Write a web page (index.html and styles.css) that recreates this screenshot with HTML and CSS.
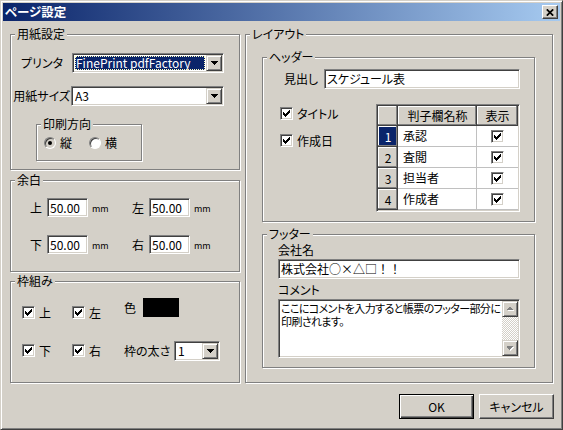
FILE: index.html
```html
<!DOCTYPE html>
<html lang="ja">
<head>
<meta charset="utf-8">
<title>ページ設定</title>
<link rel="stylesheet" href="styles.css">
</head>
<body>
<div class="window">
  <div class="titlebar">
    <span class="title">ページ設定</span>
    <span class="close"><svg width="8" height="7" viewBox="0 0 8 7"><path d="M0.8 0.3 L7.2 6.7 M7.2 0.3 L0.8 6.7" stroke="#000" stroke-width="1.7"/></svg></span>
  </div>
  <div class="client">
    <div class="columns">
      <div class="col-left">
        <div class="group g-paper">
          <span class="legend">用紙設定</span>
          <div class="row">
            <span class="lbl lbl-printer">プリンタ</span>
            <div class="combo combo-printer">
              <div class="combo-text"><span class="sel">FinePrint pdfFactory</span></div>
              <div class="combo-btn"><svg width="7" height="4" viewBox="0 0 7 4"><path d="M0 0H7V1H6V2H5V3H4V4H3V3H2V2H1V1H0Z" fill="#000"/></svg></div>
            </div>
          </div>
          <div class="row row-size">
            <span class="lbl lbl-size">用紙サイズ</span>
            <div class="combo combo-size">
              <div class="combo-text"><span class="val">A3</span></div>
              <div class="combo-btn"><svg width="7" height="4" viewBox="0 0 7 4"><path d="M0 0H7V1H6V2H5V3H4V4H3V3H2V2H1V1H0Z" fill="#000"/></svg></div>
            </div>
          </div>
          <div class="group g-orient">
            <span class="legend">印刷方向</span>
            <div class="radios">
              <span class="radio radio-on"></span><span class="rlbl">縦</span>
              <span class="radio radio-off"></span><span class="rlbl">横</span>
            </div>
          </div>
        </div>

        <div class="group g-margin">
          <span class="legend">余白</span>
          <div class="margin-grid">
            <div class="mfield"><span class="lbl mlbl">上</span><span class="num">50.00</span><span class="mm">mm</span></div>
            <div class="mfield"><span class="lbl mlbl">左</span><span class="num">50.00</span><span class="mm">mm</span></div>
            <div class="mfield"><span class="lbl mlbl">下</span><span class="num">50.00</span><span class="mm">mm</span></div>
            <div class="mfield"><span class="lbl mlbl">右</span><span class="num">50.00</span><span class="mm">mm</span></div>
          </div>
        </div>

        <div class="group g-frame">
          <span class="legend">枠組み</span>
          <div class="frame-checks">
            <div class="chk-item"><span class="chk"><svg width="7" height="7" viewBox="0 0 7 7"><path d="M0 2H1V3H2V4H3V3H4V2H5V1H6V0H7V3H6V4H5V5H4V6H3V7H2V6H1V5H0Z" fill="#000"/></svg></span><span>上</span></div>
            <div class="chk-item"><span class="chk"><svg width="7" height="7" viewBox="0 0 7 7"><path d="M0 2H1V3H2V4H3V3H4V2H5V1H6V0H7V3H6V4H5V5H4V6H3V7H2V6H1V5H0Z" fill="#000"/></svg></span><span>左</span></div>
            <div class="chk-item"><span class="chk"><svg width="7" height="7" viewBox="0 0 7 7"><path d="M0 2H1V3H2V4H3V3H4V2H5V1H6V0H7V3H6V4H5V5H4V6H3V7H2V6H1V5H0Z" fill="#000"/></svg></span><span>下</span></div>
            <div class="chk-item"><span class="chk"><svg width="7" height="7" viewBox="0 0 7 7"><path d="M0 2H1V3H2V4H3V3H4V2H5V1H6V0H7V3H6V4H5V5H4V6H3V7H2V6H1V5H0Z" fill="#000"/></svg></span><span>右</span></div>
          </div>
          <div class="frame-right">
            <div class="color-row"><span class="lbl clbl">色</span><span class="swatch"></span></div>
            <div class="thick-row">
              <span class="lbl tlbl">枠の太さ</span>
              <div class="combo combo-small">
                <div class="combo-text"><span class="val">1</span></div>
                <div class="combo-btn"><svg width="7" height="4" viewBox="0 0 7 4"><path d="M0 0H7V1H6V2H5V3H4V4H3V3H2V2H1V1H0Z" fill="#000"/></svg></div>
              </div>
            </div>
          </div>
        </div>
      </div>

      <div class="col-right">
        <div class="group g-layout">
          <span class="legend">レイアウト</span>
          <div class="group g-header">
            <span class="legend">ヘッダー</span>
            <div class="head-row">
              <span class="lbl hlbl">見出し</span>
              <span class="text-input w196">スケジュール表</span>
            </div>
            <div class="head-lower">
              <div class="head-checks">
                <div class="chk-item"><span class="chk"><svg width="7" height="7" viewBox="0 0 7 7"><path d="M0 2H1V3H2V4H3V3H4V2H5V1H6V0H7V3H6V4H5V5H4V6H3V7H2V6H1V5H0Z" fill="#000"/></svg></span><span>タイトル</span></div>
                <div class="chk-item"><span class="chk"><svg width="7" height="7" viewBox="0 0 7 7"><path d="M0 2H1V3H2V4H3V3H4V2H5V1H6V0H7V3H6V4H5V5H4V6H3V7H2V6H1V5H0Z" fill="#000"/></svg></span><span>作成日</span></div>
              </div>
              <div class="grid-wrap">
                <div class="grid">
                  <div class="hcell"></div>
                  <div class="hcell">判子欄名称</div>
                  <div class="hcell">表示</div>

                  <div class="hcell rsel">1</div>
                  <div class="dcell">承認</div>
                  <div class="dcell center"><span class="chk"><svg width="7" height="7" viewBox="0 0 7 7"><path d="M0 2H1V3H2V4H3V3H4V2H5V1H6V0H7V3H6V4H5V5H4V6H3V7H2V6H1V5H0Z" fill="#000"/></svg></span></div>

                  <div class="hcell">2</div>
                  <div class="dcell">査閲</div>
                  <div class="dcell center"><span class="chk"><svg width="7" height="7" viewBox="0 0 7 7"><path d="M0 2H1V3H2V4H3V3H4V2H5V1H6V0H7V3H6V4H5V5H4V6H3V7H2V6H1V5H0Z" fill="#000"/></svg></span></div>

                  <div class="hcell">3</div>
                  <div class="dcell">担当者</div>
                  <div class="dcell center"><span class="chk"><svg width="7" height="7" viewBox="0 0 7 7"><path d="M0 2H1V3H2V4H3V3H4V2H5V1H6V0H7V3H6V4H5V5H4V6H3V7H2V6H1V5H0Z" fill="#000"/></svg></span></div>

                  <div class="hcell">4</div>
                  <div class="dcell">作成者</div>
                  <div class="dcell center"><span class="chk"><svg width="7" height="7" viewBox="0 0 7 7"><path d="M0 2H1V3H2V4H3V3H4V2H5V1H6V0H7V3H6V4H5V5H4V6H3V7H2V6H1V5H0Z" fill="#000"/></svg></span></div>
                </div>
              </div>
            </div>
          </div>

          <div class="group g-footer">
            <span class="legend">フッター</span>
            <div class="flbl">会社名</div>
            <div class="text-input w242 fullwidth">株式会社○×△□！！</div>
            <div class="flbl flbl2">コメント</div>
            <div class="memo">
              <div class="memo-text"><div class="memo-line">ここにコメントを入力すると帳票のフッター部分に</div><div class="memo-line">印刷されます。</div></div>
              <div class="vscroll">
                <div class="sb-btn"><svg width="7" height="5" viewBox="0 0 7 5"><path d="M4 1H5V2H6V3H7V4H1V3H2V2H3V1H4Z" fill="#fff"/><path d="M3 0H4V1H5V2H6V3H0V2H1V1H2V0H3Z" fill="#808080"/></svg></div>
                <div class="sb-track"></div>
                <div class="sb-btn"><svg width="7" height="5" viewBox="0 0 7 5"><path d="M1 1H7V2H6V3H5V4H4V5H3V4H2V3H1Z" fill="#fff"/><path d="M0 0H6V1H5V2H4V3H3V4H2V3H1V2H0Z" fill="#808080"/></svg></div>
              </div>
            </div>
          </div>
        </div>
      </div>
    </div>

    <div class="buttons">
      <div class="btn btn-default">OK</div>
      <div class="btn">キャンセル</div>
    </div>
  </div>
</div>
</body>
</html>
```

FILE: styles.css
```css
* { box-sizing: border-box; }
html, body { margin: 0; padding: 0; }
body {
  width: 563px;
  height: 430px;
  overflow: hidden;
  background: #d4d0c8;
  color: #000;
  font-family: "Noto Sans CJK JP", "Noto Sans", sans-serif;
  font-size: 12px;
  line-height: 14px;
  font-feature-settings: "palt";
}

.window {
  width: 563px;
  height: 430px;
  border: 1px solid;
  border-color: #d4d0c8 #404040 #404040 #d4d0c8;
  box-shadow: inset 1px 1px #ffffff, inset -1px -1px #808080;
  padding: 2px;
  background: #d4d0c8;
  display: flex;
  flex-direction: column;
}

.titlebar {
  height: 18px;
  flex: none;
  background: linear-gradient(to right, #0a246a, #a6caf0);
  display: flex;
  align-items: center;
  justify-content: space-between;
  padding: 0 2px 0 2px;
}
.title {
  color: #fff;
  font-weight: bold;
  font-size: 12.5px;
  line-height: 14px;
}
.close {
  width: 16px;
  height: 14px;
  background: #d4d0c8;
  border: 1px solid;
  border-color: #ffffff #404040 #404040 #ffffff;
  box-shadow: inset -1px -1px #808080;
  display: flex;
  align-items: center;
  justify-content: center;
}
.close svg { display: block; }

.client {
  padding: 13px 7px 0 7px;
}
.columns {
  display: flex;
  gap: 5px;
}
.col-left {
  width: 230px;
  display: flex;
  flex-direction: column;
}
.col-right {
  width: 308px;
}

/* etched group box */
.group {
  position: relative;
  border: 1px solid #808080;
  box-shadow: inset 1px 1px #ffffff, 1px 1px #ffffff;
}
.legend {
  position: absolute;
  top: -8px;
  left: 4px;
  padding: 0 2px;
  background: #d4d0c8;
  line-height: 14px;
  white-space: nowrap;
}

.lbl { white-space: nowrap; }

/* 用紙設定 */
.g-paper {
  height: 136px;
  padding-top: 18px;
}
.row {
  display: flex;
  align-items: center;
  height: 20px;
}
.row-size { margin-top: 13px; }
.lbl-printer { width: 61px; text-align: right; padding-right: 9px; }
.lbl-size { width: 60px; text-align: right; padding-right: 1px; }

.combo {
  display: flex;
  height: 20px;
  border: 1px solid;
  border-color: #808080 #ffffff #ffffff #808080;
  box-shadow: inset 1px 1px #404040, inset -1px -1px #d4d0c8;
  padding: 1px;
  background: #fff;
}
.combo-printer { width: 152px; }
.combo-size { width: 153px; }
.combo-small { width: 46px; }
.combo-text {
  flex: 1;
  display: flex;
  align-items: center;
  min-width: 0;
  white-space: nowrap;
  overflow: hidden;
}
.combo-text .val { padding-left: 2px; }
.sel {
  flex: 1;
  margin: 0 1px;
  height: 14px;
  line-height: 14px;
  background: #0a246a;
  color: #fff;
  padding-left: 1px;
  outline: 1px dotted #ffffc0;
  outline-offset: -1px;
}
.combo-btn {
  width: 16px;
  height: 16px;
  flex: none;
  background: #d4d0c8;
  border: 1px solid;
  border-color: #d4d0c8 #404040 #404040 #d4d0c8;
  box-shadow: inset 1px 1px #ffffff, inset -1px -1px #808080;
  display: flex;
  align-items: center;
  justify-content: center;
}
.combo-btn svg { display: block; }

.g-orient {
  width: 106px;
  height: 37px;
  margin: 18px 0 0 25px;
  padding: 11px 0 0 7px;
}
.radios {
  display: flex;
  align-items: center;
  height: 14px;
}
.radio {
  width: 12px;
  height: 12px;
  flex: none;
  border-radius: 50%;
  border: 1px solid;
  border-color: #808080 #ffffff #ffffff #808080;
  box-shadow: inset 1px 1px #404040;
  background: #fff;
  position: relative;
}
.radio-on { background: #d4d0c8; }
.radio-on::after {
  content: "";
  position: absolute;
  left: 3px;
  top: 3px;
  width: 4px;
  height: 4px;
  border-radius: 50%;
  background: #000;
}
.rlbl { margin-left: 4px; width: 29px; }

/* 余白 */
.g-margin {
  height: 92px;
  margin-top: 10px;
  padding: 17px 0 0 19px;
}
.margin-grid {
  display: grid;
  grid-template-columns: 102px 102px;
  grid-auto-rows: 19px;
  row-gap: 18px;
}
.mfield {
  display: flex;
  align-items: center;
}
.mlbl { width: 17px; }
.num {
  width: 41px;
  height: 19px;
  border: 1px solid;
  border-color: #808080 #ffffff #ffffff #808080;
  box-shadow: inset 1px 1px #404040, inset -1px -1px #d4d0c8;
  background: #fff;
  padding-left: 2px;
  display: flex;
  align-items: center;
}
.mm {
  font-size: 9px;
  margin-left: 4px;
  padding-top: 2px;
}

/* 枠組み */
.g-frame {
  height: 102px;
  margin-top: 9px;
  display: flex;
  align-items: flex-start;
}
.frame-checks {
  padding: 24px 0 0 11px;
  display: grid;
  grid-template-columns: 50px 50px;
  grid-auto-rows: 13px;
  row-gap: 25px;
}
.chk-item {
  display: flex;
  align-items: center;
  gap: 4px;
  height: 13px;
  white-space: nowrap;
}
.chk {
  width: 13px;
  height: 13px;
  flex: none;
  border: 1px solid;
  border-color: #808080 #ffffff #ffffff #808080;
  box-shadow: inset 1px 1px #404040, inset -1px -1px #d4d0c8;
  background: #fff;
  display: flex;
  align-items: center;
  justify-content: center;
}
.chk svg { display: block; }
.frame-right {
  margin-left: 2px;
  padding-top: 16px;
}
.color-row {
  display: flex;
  align-items: center;
  height: 19px;
}
.clbl { width: 19px; }
.swatch {
  width: 36px;
  height: 19px;
  background: #000;
}
.thick-row {
  display: flex;
  align-items: center;
  height: 20px;
  margin-top: 24px;
}
.tlbl { width: 50px; }

/* レイアウト */
.g-layout {
  height: 349px;
  padding: 22px 0 0 16px;
}
.g-header {
  width: 273px;
  height: 165px;
  padding-top: 11px;
}
.head-row {
  display: flex;
  align-items: center;
  height: 20px;
}
.hlbl { width: 61px; padding-left: 21px; }
.text-input {
  display: flex;
  align-items: center;
  height: 20px;
  border: 1px solid;
  border-color: #808080 #ffffff #ffffff #808080;
  box-shadow: inset 1px 1px #404040, inset -1px -1px #d4d0c8;
  background: #fff;
  padding-left: 2px;
  white-space: nowrap;
}
.fullwidth { font-feature-settings: normal; }
.w196 { width: 196px; }
.w242 { width: 242px; margin-top: 2px; }
.head-lower {
  display: flex;
  margin-top: 15px;
}
.head-checks {
  width: 113px;
  padding: 3px 0 0 17px;
  display: flex;
  flex-direction: column;
  gap: 14px;
}
.grid-wrap {
  width: 144px;
  height: 108px;
  border: 1px solid;
  border-color: #808080 #ffffff #ffffff #808080;
  box-shadow: inset 1px 1px #404040, inset -1px -1px #d4d0c8;
  padding: 1px;
  background: #fff;
}
.grid {
  display: grid;
  grid-template-columns: 20px 79px 41px;
  grid-template-rows: 20px repeat(4, 21px);
}
.hcell {
  background: #d4d0c8;
  box-shadow: inset -1px -1px #404040, inset -2px -2px #808080, inset 1px 1px #ffffff;
  display: flex;
  align-items: center;
  justify-content: center;
  white-space: nowrap;
}
.hcell.rsel {
  background: #0a246a;
  color: #fff;
}
.dcell {
  background: #fff;
  border-right: 1px solid #c0c0c0;
  border-bottom: 1px solid #c0c0c0;
  display: flex;
  align-items: center;
  padding-left: 5px;
  white-space: nowrap;
}
.dcell.center {
  justify-content: center;
  padding-left: 0;
  border-right: none;
}

.g-footer {
  width: 273px;
  height: 134px;
  margin-top: 12px;
  padding: 8px 0 0 15px;
}
.flbl { height: 14px; }
.flbl2 { margin-top: 4px; }
.memo {
  width: 242px;
  height: 59px;
  margin-top: 2px;
  display: flex;
  border: 1px solid;
  border-color: #808080 #ffffff #ffffff #808080;
  box-shadow: inset 1px 1px #404040, inset -1px -1px #d4d0c8;
  padding: 1px;
  background: #fff;
}
.memo-text {
  flex: 1;
  min-width: 0;
  overflow: hidden;
  white-space: nowrap;
  padding: 1px 0 0 1px;
  font-size: 11px;
  letter-spacing: -0.6px;
}
.memo-line {
  height: 13px;
  line-height: 13px;
}
.vscroll {
  width: 16px;
  flex: none;
  display: flex;
  flex-direction: column;
  background: repeating-conic-gradient(#ffffff 0 25%, #d4d0c8 0 50%) 0 0 / 2px 2px;
}
.sb-btn {
  width: 16px;
  height: 16px;
  flex: none;
  background: #d4d0c8;
  border: 1px solid;
  border-color: #d4d0c8 #404040 #404040 #d4d0c8;
  box-shadow: inset 1px 1px #ffffff, inset -1px -1px #808080;
  display: flex;
  align-items: center;
  justify-content: center;
}
.sb-btn svg { display: block; }
.sb-track { flex: 1; }

/* buttons */
.buttons {
  display: flex;
  justify-content: flex-end;
  gap: 5px;
  margin-top: 11px;
  margin-right: -1px;
}
.btn {
  width: 75px;
  height: 25px;
  background: #d4d0c8;
  border: 1px solid;
  border-color: #ffffff #404040 #404040 #ffffff;
  box-shadow: inset -1px -1px #808080;
  display: flex;
  align-items: center;
  justify-content: center;
  white-space: nowrap;
}
.btn-default {
  border: 1px solid #000;
  box-shadow: inset 1px 1px #ffffff, inset -1px -1px #404040, inset -2px -2px #808080;
}
```
